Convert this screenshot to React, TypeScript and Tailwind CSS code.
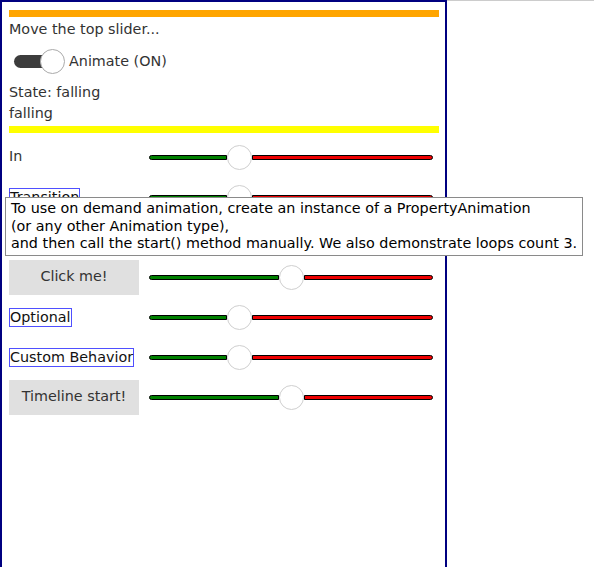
import React from "react";

interface SliderProps {
  value: number; // 0-1
}

const TRACK = 284;
const THUMB = 25;

const Slider: React.FC<SliderProps> = ({ value }) => {
  const left = Math.round(value * (TRACK - THUMB));
  return (
    <div className="flex items-center w-[284px] h-[25px]">
      <div
        className="h-[5px] bg-[#008000] border border-black rounded-l-full"
        style={{ width: left }}
      />
      <div className="w-[25px] h-[25px] shrink-0 rounded-full bg-white border border-[#cfcfcf]" />
      <div className="flex-1 h-[5px] bg-[#ee0000] border border-black rounded-r-full" />
    </div>
  );
};

const Label: React.FC<{ text: string }> = ({ text }) => (
  <span className="border border-solid border-[color:#4f4fff] leading-[17px] text-[#111]">
    {text}
  </span>
);

const Button: React.FC<{ text: string }> = ({ text }) => (
  <div className="w-[130px] h-[35px] bg-[#e0e0e0] flex items-center justify-center text-[#333]">
    {text}
  </div>
);

const Row: React.FC<{ left?: React.ReactNode; value: number }> = ({ left, value }) => (
  <div className="flex items-center h-[40px]">
    <div className="w-[140px] flex items-center">{left}</div>
    <Slider value={value} />
  </div>
);

export default function App() {
  return (
    <div
      className="flex h-screen overflow-hidden text-[14.33px] text-[#333]"
      style={{ fontFamily: '"DejaVu Sans", sans-serif' }}
    >
      <div className="relative w-[447px] shrink-0 border-x-2 border-t-2 border-[#000080] pl-[7px] pt-[8px]">
        <div className="w-[430px] h-[7px] bg-[#ffa500]" />
        <div className="mt-[2px] leading-[20px]">Move the top slider...</div>

        {/* Animate toggle */}
        <div className="mt-[10px] flex items-center h-[25px] pl-[5px]">
          <div className="relative w-[51px] h-[25px] flex items-center">
            <div className="w-[46px] h-[13px] rounded-full bg-[#3c3c3c]" />
            <div className="absolute right-0 top-0 w-[25px] h-[25px] rounded-full bg-white border border-[#aaa]" />
          </div>
          <span className="ml-[4px]">Animate (ON)</span>
        </div>

        <div className="mt-[8px] leading-[21px]">State: falling</div>
        <div className="leading-[21px]">falling</div>
        <div className="mt-[2px] w-[430px] h-[7px] bg-[#ffff00]" />

        <div className="mt-[4px]">
          <Row left={<span>In</span>} value={0.3} />
          <Row left={<Label text="Transition" />} value={0.3} />
          <Row value={0.3} />
          <Row left={<Button text="Click me!" />} value={0.5} />
          <Row left={<Label text="Optional" />} value={0.3} />
          <Row left={<Label text="Custom Behavior" />} value={0.3} />
          <Row left={<Button text="Timeline start!" />} value={0.5} />
        </div>

        {/* Tooltip */}
        <div className="absolute left-[3px] top-[195px] w-[578px] h-[59px] z-10 bg-white border border-[#8a8a8a] pl-[5px] pt-[2px] text-black leading-[17.5px]">
          <div>To use on demand animation, create an instance of a PropertyAnimation</div>
          <div>(or any other Animation type),</div>
          <div>and then call the start() method manually. We also demonstrate loops count 3.</div>
        </div>
      </div>
      <div className="flex-1 border-t border-[#cccccc]" />
    </div>
  );
}
